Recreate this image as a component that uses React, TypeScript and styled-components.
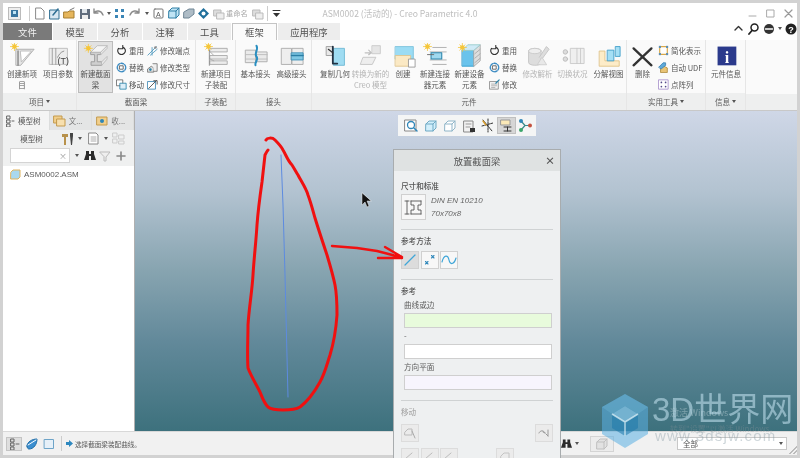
import React from "react";
import styled, { createGlobalStyle } from "styled-components";

const Global = createGlobalStyle`
  html, body { margin: 0; padding: 0; background: #d2d2d2; }
  #root { width: 800px; height: 458px; overflow: hidden; }
`;

const Root = styled.div`
  position: relative; width: 800px; height: 458px; box-sizing: border-box; overflow: hidden;
  padding: 3px 3px 3px; display: flex; flex-direction: column; background: #d2d2d2;
  font-family: "Noto Sans CJK SC", "Liberation Sans", sans-serif; font-size: 8px; color: #555;
  filter: blur(0.4px);
`;
const TitleBar = styled.div`
  height: 20px; flex: none; background: #fff; display: grid; grid-template-columns: 1fr auto 1fr; align-items: center;
`;
const Qat = styled.div`display: flex; align-items: center; padding-left: 5px; min-width: 0;`;
const AppIcon = styled.div`
  width: 13px; height: 13px; border: 1px solid #bbb; background: #eee; box-sizing: border-box; display: flex; align-items: center; justify-content: center;
  margin-right: 6px;
`;
const VSep = styled.div<{ $m?: number }>`width: 1px; height: 15px; background: #ccc; margin: 0 ${p => p.$m ?? 1}px;`;
const QatSlot = styled.div<{ $w?: number }>`
  width: ${p => p.$w ?? 15}px; height: 14px; display: flex; align-items: center; justify-content: center; flex: none;
`;
const QatText = styled.span`color: #a8a8a8; font-size: 7.2px; width: 25px; white-space: nowrap;`;
const Title = styled.div`
  color: #bdbdbd; font-size: 8.6px; white-space: nowrap;
`;
const WinControls = styled.div`display: flex; justify-content: flex-end; gap: 5px; padding-right: 2px; align-items: center;`;

const TabRow = styled.div`height: 17px; flex: none; background: #fff; display: flex; align-items: stretch;`;
const Tab = styled.div<{ $w: number; $kind?: string }>`
  width: ${p => p.$w}px; flex: none; box-sizing: border-box; display: flex; align-items: center; justify-content: center;
  font-size: 9.4px; margin-right: 1px;
  background: ${p => (p.$kind === "file" ? "#7a7a7a" : p.$kind === "active" ? "#fbfbfb" : "#ededed")};
  color: ${p => (p.$kind === "file" ? "#f2f2f2" : "#505050")};
  border: ${p => (p.$kind === "active" ? "1px solid #c4c4c4" : "none")};
  border-bottom: none;
`;
const Helpers = styled.div`margin-left: auto; display: flex; align-items: center; gap: 3px; margin-top: -6px;`;

const Ribbon = styled.div`height: 70px; flex: none; background: #fafafa; display: flex; border-bottom: 1px solid #c8c8c8;`;
const Group = styled.div<{ $w: number }>`
  width: ${p => p.$w}px; flex: none; display: flex; flex-direction: column; box-sizing: border-box; border-right: 1px solid #e6e6e6;
`;
const GroupBody = styled.div`height: 53px; display: flex; padding: 1px 0 0 1px; box-sizing: border-box;`;
const GroupFoot = styled.div`
  flex: 1; background: #eeefef; display: flex; align-items: center; justify-content: center; gap: 2px; font-size: 7.5px; color: #5a5a5a;
`;
const Filler = styled.div`flex: 1; display: flex; flex-direction: column; &::after { content: ""; margin-top: auto; height: 16px; background: #eeefef; }`;
const Caret = styled.span`
  display: inline-block; width: 0; height: 0; border: 2.5px solid transparent; border-top: 3px solid #555; border-bottom: none;
`;
const LargeTool = styled.div<{ $w: number; $on?: boolean; $off?: boolean }>`
  width: ${p => p.$w}px; flex: none; height: 52px; box-sizing: border-box; display: flex; flex-direction: column; align-items: center; padding-top: 1px;
  background: ${p => (p.$on ? "#e2e2e2" : "transparent")}; border: 1px solid ${p => (p.$on ? "#bcbcbc" : "transparent")};
  color: ${p => (p.$off ? "#b4b4b4" : "#555")};
`;
const LargeLabel = styled.div`
  font-size: 7.5px; line-height: 11px; text-align: center; white-space: pre-line; width: 120%;
`;
const SmallCol = styled.div<{ $w: number }>`width: ${p => p.$w}px; flex: none; display: flex; flex-direction: column; padding-top: 1px;`;
const SmallTool = styled.div`height: 17px; display: flex; align-items: center; gap: 2px; font-size: 7.5px; white-space: nowrap; color: #555;`;

const Main = styled.div`flex: 1; min-height: 0; display: flex; position: relative;`;
const LeftPanel = styled.div`width: 132px; flex: none; box-sizing: border-box; display: flex; flex-direction: column; background: #eff0f0; border-right: 1px solid #b0b0b0;`;
const PanelTabs = styled.div`height: 19px; display: flex; background: #dcdddd; flex: none;`;
const PanelTab = styled.div<{ $w: number; $on?: boolean }>`
  width: ${p => p.$w}px; box-sizing: border-box; display: flex; align-items: center; gap: 3px; padding-left: 3px; font-size: 7.5px;
  background: ${p => (p.$on ? "#f4f4f4" : "#e4e5e5")}; margin-right: 1px; color: ${p => (p.$on ? "#555" : "#777")};
`;
const PanelRow = styled.div`height: 17px; display: flex; align-items: center; flex: none; font-size: 7.5px;`;
const TreeLabel = styled.span`width: 57px; text-align: center;`;
const SearchBox = styled.div`
  width: 60px; height: 15px; margin-left: 7px; background: #fff; border: 1px solid #d4d4d4; box-sizing: border-box; display: flex; align-items: center; justify-content: flex-end;
  padding-right: 2px; color: #999; font-size: 8px; flex: none;
`;
const Tree = styled.div`flex: 1; background: #fff; margin-top: 2px; padding: 2px 0 0 7px; display: flex; flex-direction: column;`;
const TreeItem = styled.div`height: 13px; display: flex; align-items: center; gap: 3px; font-size: 8px; color: #5a5a5a; font-family: "Liberation Sans", sans-serif;`;

const Viewport = styled.div`
  flex: 1; position: relative; background: linear-gradient(180deg, #cfd7e7 0%, #b3c3d1 25%, #87a4b0 50%, #62899a 72%, #3d717d 100%);
`;
const MiniBar = styled.div`
  position: absolute; left: 263px; top: 4px; height: 21px; width: 138px; box-sizing: border-box; background: #f4f5f5; display: flex; align-items: center; padding-left: 4px;
`;
const MiniBtn = styled.div<{ $on?: boolean }>`
  width: 19px; height: 17px; display: flex; align-items: center; justify-content: center; flex: none;
  background: ${p => (p.$on ? "#d6d6d6" : "transparent")}; border: 1px solid ${p => (p.$on ? "#c0c0c0" : "transparent")}; box-sizing: border-box;
`;

const Dialog = styled.div`
  position: absolute; left: 258px; top: 38px; width: 168px; height: 340px; box-sizing: border-box; background: #eef0f1; border: 1px solid #a8acae; z-index: 2;
  display: flex; flex-direction: column;
`;
const DlgHead = styled.div`
  height: 21px; flex: none; background: #dfe2e2; display: flex; align-items: center; justify-content: center; position: relative; font-size: 9.3px; color: #555;
`;
const DlgClose = styled.span`position: absolute; right: 5px; top: 3px; font-size: 10px; font-weight: 700; color: #555;`;
const DlgBody = styled.div`padding: 9px 7px 0; display: flex; flex-direction: column;`;
const DlgLabel = styled.div<{ $off?: boolean }>`
  font-size: 7.6px; line-height: 12px; color: ${p => (p.$off ? "#aaa" : "#555")}; font-weight: 500;
`;
const SpecRow = styled.div`display: flex; margin-top: 2px; gap: 5px; height: 27px;`;
const IconBtn = styled.div<{ $w?: number; $h?: number; $on?: boolean; $off?: boolean; $ml?: number }>`
  width: ${p => p.$w ?? 18}px; height: ${p => p.$h ?? 18}px; box-sizing: border-box; flex: none; display: flex; align-items: center; justify-content: center;
  margin-left: ${p => p.$ml ?? 0}px;
  border: 1px solid ${p => (p.$off ? "#dcdcdc" : "#d0d0d0")}; background: ${p => (p.$on ? "#dcdcdc" : p.$off ? "#ebebeb" : "#f7f7f7")};
`;
const SpecText = styled.div`
  font-style: italic; font-size: 8px; line-height: 13px; color: #666; font-family: "Liberation Sans", sans-serif;
`;
const Rule = styled.div<{ $t: number; $b: number }>`height: 1px; background: #cfd2d3; margin: ${p => p.$t}px 0 ${p => p.$b}px;`;
const BtnRow = styled.div<{ $t: number }>`display: flex; gap: 1.5px; margin-top: ${p => p.$t}px;`;
const FieldLabel = styled.div`font-size: 7.6px; line-height: 12px; margin: 2px 0 0 3px; color: #5c5c5c;`;
const Field = styled.div<{ $bg: string }>`
  height: 15px; margin: 2px 1px 0 3px; background: ${p => p.$bg}; border: 1px solid #cfcfcf; box-sizing: border-box;
`;
const MoveRow = styled.div`display: flex; justify-content: space-between; margin-top: 6px;`;

const StatusBar = styled.div`
  height: 24px; flex: none; background: #f1f1f1; display: flex; align-items: center; padding-left: 3px; border-top: 1px solid #d8d8d8; box-sizing: border-box;
`;
const StatusIcon = styled.div<{ $on?: boolean; $w?: number }>`
  width: ${p => p.$w ?? 16}px; height: 14px; display: flex; align-items: center; justify-content: center; box-sizing: border-box; flex: none; margin-right: 1px;
  background: ${p => (p.$on ? "#dedede" : "transparent")}; border: 1px solid ${p => (p.$on ? "#c4c4c4" : "transparent")};
`;
const StatusMsg = styled.div`display: flex; align-items: center; gap: 1px; font-size: 6.6px; color: #5a5a5a; white-space: nowrap; width: 496px; flex: none;`;
const Filter = styled.div`
  width: 110px; height: 13px; margin-left: 63px; background: #fff; border: 1px solid #c8c8c8; box-sizing: border-box; display: flex; align-items: center; justify-content: space-between;
  padding: 0 3px 0 5px; font-size: 7.5px; flex: none;
`;
const SquareBtn = styled.div`width: 24px; height: 16px; margin-left: 8px; border: 1px solid #d4d4d4; background: #ececec; box-sizing: border-box; display: flex; align-items: center; justify-content: center;`;
const Grip = styled.div`
  position: absolute; right: 3px; bottom: 4px; width: 8px; height: 8px; z-index: 1;
  background: linear-gradient(135deg, transparent 50%, #bbb 50%, #bbb 60%, transparent 60%, transparent 75%, #bbb 75%, #bbb 85%, transparent 85%);
`;

const Watermark = styled.div`position: absolute; left: 600px; top: 392px; width: 200px; height: 60px; z-index: 4; pointer-events: none;`;
const WmLogo = styled.svg`position: absolute; left: 0; top: 0;`;
const WmBig = styled.div`
  position: absolute; left: 52px; top: -2px; font-family: "Liberation Sans", "Noto Sans CJK SC", sans-serif; font-size: 33px; line-height: 40px; color: rgba(190, 222, 235, 0.6); white-space: nowrap;
`;
const WmUrl = styled.div`
  position: absolute; left: 55px; top: 36px; font-family: "Liberation Sans", sans-serif; font-size: 15px; line-height: 16px; letter-spacing: 1.200px; color: rgba(130, 150, 160, 0.38); white-space: nowrap;
`;
const WmWin = styled.div`
  position: absolute; left: 70px; top: 14px; font-size: 9px; line-height: 14px; color: rgba(210, 225, 230, 0.4); white-space: nowrap;
`;
const WmWin2 = styled(WmWin)`top: 30px; font-size: 8px; color: rgba(140, 150, 155, 0.35);`;
const Annot = styled.svg`position: absolute; left: 0; top: 0; z-index: 3; pointer-events: none;`;

type GP = { s?: number; h?: number; v?: string; children: React.ReactNode };
const G = ({ s = 13, h, v, children }: GP) => (
  <svg width={s} height={h ?? s} viewBox={v ?? `0 0 ${s} ${h ?? s}`} fill="none" strokeLinecap="round" strokeLinejoin="round">{children}</svg>
);
const Star = ({ x = 5, y = 4 }: { x?: number; y?: number }) => (
  <g>
    <circle cx={x} cy={y} r="2.6" fill="#f5c63a" />
    <path d={`M${x} ${y - 4.5}V${y + 4.5}M${x - 4.5} ${y}H${x + 4.5}M${x - 3} ${y - 3}L${x + 3} ${y + 3}M${x + 3} ${y - 3}L${x - 3} ${y + 3}`} stroke="#f5c63a" strokeWidth="0.9" />
  </g>
);
const large: Record<string, React.ReactNode> = {
  newItem: <><path d="M7 7H27L12 25H7Z" fill="#e6e6e6" stroke="#aaa" /><path d="M9 9V25" stroke="#888" strokeWidth="1.6" /><path d="M12 9H24L13 21Z" fill="#fff" stroke="#bbb" /><Star /></>,
  params: <><path d="M4 6H24V24H4Z" fill="#ededed" stroke="#bbb" /><path d="M7 6V24M11 6V24" stroke="#999" /><path d="M13 16C14 14 16 10 20 9" stroke="#888" /><text x="13" y="23" fontSize="10" fill="#444" fontFamily="Liberation Sans">(T)</text></>,
  beam: <><path d="M9 10H20V13H16V21H21V25H9V21H13V13H9Z" fill="#cfcfcf" stroke="#999" /><path d="M20 10L27 3V6L20 13M21 21L27 15V18L21 25" fill="#e8e8e8" stroke="#bbb" /><path d="M9 10L16 3H27L20 10Z" fill="#f4f4f4" stroke="#bbb" /><Star x={6} y={6} /></>,
  subAsm: <><path d="M7 6H26V10H7ZM7 14H26V18H7ZM7 20H26V24H7Z" fill="#ececec" stroke="#aaa" /><path d="M7 10L11 14M7 18L11 20" stroke="#aaa" /><path d="M6 8V25" stroke="#888" /><Star x={5} y={4} /></>,
  joint: <><path d="M3 8H14V22H3ZM15 10H27V21H15Z" fill="#eaeaea" stroke="#aaa" /><path d="M3 13H27M3 18H27" stroke="#bbb" /><path d="M15 3C18 7 12 12 15 15C18 18 13 21 14 25" stroke="#2a8fc1" strokeWidth="2.2" /></>,
  joint2: <><path d="M3 6H14V24H3ZM15 6H27V24H15Z" fill="#eee" stroke="#aaa" /><path d="M14 11H27V19H14Z" fill="#7fc7e3" stroke="#3a8db5" /><path d="M14 14H27" stroke="#2a7ea5" strokeWidth="1.5" /></>,
  copyGeo: <><path d="M12 6H24V25H12Z" fill="#9fdcf2" stroke="#6fb9d4" /><path d="M4 4H11V14H4Z" fill="#e8e8e8" stroke="#999" /><path d="M11 4V23H16" stroke="#234" strokeWidth="2" /><path d="M6 7L11 11" stroke="#333" strokeWidth="1.3" /></>,
  convert: <><path d="M6 16H20L16 24H3Z" fill="#eee" stroke="#c4c4c4" /><path d="M16 3H25V12H16Z" fill="#e6e6e6" stroke="#c8c8c8" /><path d="M8 11H14M12 8L15 11L12 13" stroke="#c0c0c0" strokeWidth="1.4" /></>,
  create: <><path d="M5 4H25V18H5Z" fill="#9bdcf4" stroke="#7dc2dc" /><path d="M5 14H22V26H5Z" fill="#fbe9c4" stroke="#dfc58d" /><path d="M20 18H27V27H20Z" fill="#fff" stroke="#999" /></>,
  conn: <><path d="M11 5H26M11 24H26M8 10H26M8 19H26" stroke="#aaa" /><path d="M9 11H21V18H9Z" fill="#a0d9ef" stroke="#2c85ac" strokeWidth="1.2" /><path d="M5 13H12" stroke="#666" /><Star x={5} y={4} /></>,
  equip: <><path d="M6 8H19V26H6Z" fill="#69c3ec" stroke="#2f9ccc" /><path d="M19 8L26 2V20L19 26Z" fill="#dedede" stroke="#aaa" /><path d="M20 12L26 7M20 17L26 12M20 22L26 17" stroke="#aaa" /><path d="M6 8L12 2H26L19 8Z" fill="#cfeaf6" stroke="#9cc" /><Star x={6} y={5} /></>,
  analyze: <><path d="M4 9C4 5 18 5 18 9V22C18 26 4 26 4 22Z" fill="#ddd" stroke="#c4c4c4" /><ellipse cx="11" cy="9" rx="7" ry="3" fill="#eee" stroke="#c8c8c8" /><path d="M16 16L24 4L27 7L19 18" fill="#ddd" stroke="#c4c4c4" /><path d="M14 24L19 16L24 24Z" fill="#e8e8e8" stroke="#ccc" /></>,
  status: <><circle cx="6" cy="10" r="2.5" fill="#ddd" stroke="#bbb" /><circle cx="6" cy="18" r="2.5" fill="#ddd" stroke="#bbb" /><path d="M12 6H27V23H12ZM19 6V23M23 6V23" fill="#efefef" stroke="#c8c8c8" /></>,
  explode: <><path d="M4 9H10V20H26V26H4Z" fill="#fdecc8" stroke="#e0c287" /><path d="M13 8H20V20H13Z" fill="#a5dff5" stroke="#3e9dc9" /><path d="M22 4H27V15H22Z" fill="#a5dff5" stroke="#3e9dc9" /></>,
  del: <><path d="M4 6L24 25M24 6L4 25" stroke="#333" strokeWidth="2.6" /></>,
  info: <><rect x="4" y="4" width="21" height="21" fill="#2b3a8c" /><text x="14.500" y="22" textAnchor="middle" fontSize="18" fontWeight="700" fill="#fff" fontFamily="Liberation Serif">i</text></>,
};
const small: Record<string, React.ReactNode> = {
  reuse: <path d="M3 4A4.5 4.5 0 1 0 8 2.5M8 0.5V4.500H4" stroke="#333" strokeWidth="1.3" />,
  replace: <><circle cx="6.500" cy="6.500" r="5" stroke="#3b8bc2" strokeWidth="1.6" strokeDasharray="3 1.500" /><rect x="4.500" y="4.500" width="4" height="4" fill="#fff" stroke="#555" /></>,
  move: <><rect x="1" y="1" width="7" height="7" fill="#fff" stroke="#666" /><rect x="5" y="5" width="7" height="7" fill="#dceef8" stroke="#2c85ac" /></>,
  endpt: <><path d="M1 12L11 2M4 12L12 5M6 3V12" stroke="#4b97bd" /><circle cx="10" cy="3" r="1.500" fill="#888" /></>,
  type: <><path d="M1 8L5 5L8 7V12H1Z" fill="#ddd" stroke="#777" /><path d="M7 2H12V11H8" stroke="#777" fill="#eee" /><circle cx="4" cy="9" r="1.500" fill="#2c85ac" /></>,
  dim: <><rect x="1" y="3" width="9" height="9" fill="#fff" stroke="#3d86b3" /><path d="M2 11L11 2M8 2H12V6" stroke="#444" /></>,
  modify: <><rect x="1" y="3" width="10" height="9" fill="#f4f4f4" stroke="#888" /><path d="M3 6H9M3 8H9M3 10H7" stroke="#aaa" /><path d="M8 5L12 1" stroke="#2c85ac" strokeWidth="1.400" /></>,
  simp: <><rect x="2" y="2" width="9" height="9" fill="#fff" stroke="#d9a94a" strokeWidth="1.400" /><rect x="1" y="1" width="2.500" height="2.500" fill="#5d8db3" /><rect x="9.500" y="9.500" width="2.500" height="2.500" fill="#5d8db3" /><rect x="9.500" y="1" width="2.500" height="2.500" fill="#5d8db3" /><rect x="1" y="9.500" width="2.500" height="2.500" fill="#5d8db3" /></>,
  udf: <><path d="M3 12V7L7 5L11 7V12Z" fill="#e9c476" stroke="#b08c3c" /><path d="M1 6L6 1H9V4L4 8Z" fill="#5fa9d8" stroke="#3c84b6" /></>,
  dots: <><rect x="1" y="1" width="11" height="11" fill="#fff" stroke="#a78fcb" />{[4, 9].map(x => [4, 9].map(y => <circle key={`${x}${y}`} cx={x} cy={y} r="1" fill="#544a8a" />))}</>,
};
const Lg = ({ n }: { n: string }) => <G s={25} h={25} v="0 0 28 28">{large[n]}</G>;
const Sm = ({ n }: { n: string }) => <G s={11} h={11} v="0 0 13 13">{small[n]}</G>;
const Tool = ({ n, w = 35, on, off, children }: { n: string; w?: number; on?: boolean; off?: boolean; children: string }) => (
  <LargeTool $w={w} $on={on} $off={off}><Lg n={n} /><LargeLabel>{children}</LargeLabel></LargeTool>
);
const Smalls = ({ w, items }: { w: number; items: [string, string][] }) => (
  <SmallCol $w={w}>{items.map(([n, t]) => <SmallTool key={t}><Sm n={n} /><span>{t}</span></SmallTool>)}</SmallCol>
);
const Bino = () => <G s={12} h={11}><path d="M2 1H5V4H7V1H10V4L12 10H7V6H5V10H0L2 4Z" fill="#2b2b2b" /></G>;
const Cube = ({ c = "#e9e9e9", st = "#bbb" }: { c?: string; st?: string }) => (
  <G s={14}><path d="M2 5L5 2H12V9L9 12H2Z" fill={c} stroke={st} /><path d="M2 5H9V12M9 5L12 2" stroke={st} /></G>
);

const qat: React.ReactNode[] = [
  <G key="a"><path d="M3 1H8L11 4V12H3Z" fill="#fff" stroke="#8a8a8a" /></G>,
  <G key="b"><rect x="2" y="3" width="9" height="9" fill="#d9e8f2" stroke="#2e6e92" /><path d="M5 8L10 2" stroke="#2e6e92" strokeWidth="1.500" /></G>,
  <G key="c"><path d="M1 5H5L6 4H11V11H1Z" fill="#e6b65c" stroke="#a77e30" /><path d="M7 3L11 1" stroke="#777" /></G>,
  <G key="d"><rect x="2" y="2" width="10" height="10" fill="#606c7c" /><rect x="4" y="2" width="5" height="4" fill="#dfe5ea" /><rect x="4" y="8" width="6" height="4" fill="#eee" /></G>,
  <G key="e"><path d="M2 6C4 3 9 3 11 8M2 2V6H6" stroke="#8b8b8b" strokeWidth="1.400" /></G>,
];

export default function App() {
  return (
    <Root>
      <Global />
      <TitleBar>
        <Qat>
          <AppIcon><G s={9}><rect x="1" y="1" width="7" height="7" fill="#3a76a0" /><rect x="3" y="2" width="3" height="3" fill="#bfe4f5" /></G></AppIcon>
          <VSep $m={2} />
          {qat.slice(0, 4).map((q, i) => <QatSlot key={i}>{q}</QatSlot>)}
          <QatSlot $w={13}>{qat[4]}</QatSlot><QatSlot $w={8}><Caret /></QatSlot>
          <QatSlot $w={13}><G><path d="M2 2H5V5H2ZM8 2H11V5H8ZM2 8H5V11H2ZM8 8H11V11H8Z" fill="#3b86b6" /></G></QatSlot>
          <QatSlot $w={16}><G><path d="M11 6C9 3 4 3 2 8M11 2V6H7" stroke="#8b8b8b" strokeWidth="1.400" /></G></QatSlot>
          <QatSlot $w={9}><Caret /></QatSlot>
          <QatSlot><G s={13}><rect x="2" y="2" width="9" height="9" rx="1" stroke="#777" /><text x="4" y="9.500" fontSize="7" fill="#555" fontFamily="Liberation Sans">A</text></G></QatSlot>
          <QatSlot><Cube c="#bfe4f5" st="#2e7ea5" /></QatSlot>
          <QatSlot><G s={14}><path d="M2 6L7 3H12V8L7 12H2Z" fill="#aebcc6" stroke="#6f8594" /></G></QatSlot>
          <QatSlot><G s={13}><path d="M6.500 1L12 6.500L6.500 12L1 6.500Z" fill="#1f6f9b" /><circle cx="6.500" cy="6.500" r="2" fill="#fff" /></G></QatSlot>
          <QatSlot><G s={14}><path d="M2 4H9V10H2Z" fill="#ddd" stroke="#bbb" /><path d="M5 7H12V13H5Z" fill="#eee" stroke="#bbb" /></G></QatSlot>
          <QatText>重命名</QatText>
          <QatSlot $w={14}><G s={14}><path d="M2 4H9V10H2Z" fill="#ddd" stroke="#bbb" /><path d="M5 7H12V13H5Z" fill="#eee" stroke="#bbb" /></G></QatSlot>
          <VSep $m={2} />
          <QatSlot $w={12}><G s={9}><path d="M1 1.500H8" stroke="#333" /><path d="M1 4H8L4.500 8Z" fill="#333" /></G></QatSlot>
        </Qat>
        <Title>ASM0002 (活动的) - Creo Parametric 4.0</Title>
        <WinControls>
          <G s={13}><path d="M3 9H10" stroke="#aaa" /></G>
          <G s={13}><rect x="3" y="3" width="7" height="7" stroke="#aaa" /></G>
          <G s={13}><path d="M3 3L10 10M10 3L3 10" stroke="#999" strokeWidth="1.200" /></G>
        </WinControls>
      </TitleBar>
      <TabRow>
        <Tab $w={49} $kind="file">文件</Tab>
        <Tab $w={44}>模型</Tab>
        <Tab $w={44}>分析</Tab>
        <Tab $w={44}>注释</Tab>
        <Tab $w={43}>工具</Tab>
        <Tab $w={45} $kind="active">框架</Tab>
        <Tab $w={62}>应用程序</Tab>
        <Helpers>
          <G s={11}><path d="M2 7L5.500 3.500L9 7" stroke="#333" strokeWidth="1.400" /></G>
          <G s={13}><circle cx="7.500" cy="5.500" r="3.500" stroke="#222" strokeWidth="1.500" /><path d="M5 8.500L2 12" stroke="#222" strokeWidth="1.800" /></G>
          <G s={12}><circle cx="6" cy="6" r="5" fill="#333" /><path d="M2.500 6H9.500" stroke="#fff" strokeWidth="1.500" /></G>
          <Caret />
          <G s={12}><circle cx="6" cy="6" r="5.500" fill="#222" /><text x="6" y="9.500" textAnchor="middle" fontSize="9" fontWeight="700" fill="#fff" fontFamily="Liberation Sans">?</text></G>
        </Helpers>
      </TabRow>
      <Ribbon>
        <Group $w={74}>
          <GroupBody><Tool n="newItem" w={36}>{"创建新项\n目"}</Tool><Tool n="params" w={36}>项目参数</Tool></GroupBody>
          <GroupFoot>项目 <Caret /></GroupFoot>
        </Group>
        <Group $w={119}>
          <GroupBody>
            <Tool n="beam" on>{"新建截面\n梁"}</Tool>
            <SmallCol $w={3} />
            <Smalls w={31} items={[["reuse", "重用"], ["replace", "替换"], ["move", "移动"]]} />
            <Smalls w={47} items={[["endpt", "修改端点"], ["type", "修改类型"], ["dim", "修改尺寸"]]} />
          </GroupBody>
          <GroupFoot>截面梁</GroupFoot>
        </Group>
        <Group $w={40}>
          <GroupBody><Tool n="subAsm" w={38}>{"新建项目\n子装配"}</Tool></GroupBody>
          <GroupFoot>子装配</GroupFoot>
        </Group>
        <Group $w={76}>
          <GroupBody><Tool n="joint" w={37}>基本接头</Tool><Tool n="joint2" w={35}>高级接头</Tool></GroupBody>
          <GroupFoot>接头</GroupFoot>
        </Group>
        <Group $w={315}>
          <GroupBody>
            <SmallCol $w={4} />
            <Tool n="copyGeo" w={36}>复制几何</Tool>
            <Tool n="convert" off>{"转换为新的\nCreo 模型"}</Tool>
            <Tool n="create" w={30}>创建</Tool>
            <Tool n="conn" w={34}>{"新建连接\n器元素"}</Tool>
            <Tool n="equip">{"新建设备\n元素"}</Tool>
            <SmallCol $w={2} />
            <Smalls w={31} items={[["reuse", "重用"], ["replace", "替换"], ["modify", "修改"]]} />
            <Tool n="analyze" off>修改解析</Tool>
            <Tool n="status" off>切换状况</Tool>
            <Tool n="explode" w={37}>分解视图</Tool>
          </GroupBody>
          <GroupFoot>元件</GroupFoot>
        </Group>
        <Group $w={79}>
          <GroupBody><Tool n="del" w={29}>删除</Tool><SmallCol $w={1} /><Smalls w={48} items={[["simp", "简化表示"], ["udf", "自动 UDF"], ["dots", "点阵列"]]} /></GroupBody>
          <GroupFoot>实用工具 <Caret /></GroupFoot>
        </Group>
        <Group $w={40}>
          <GroupBody><Tool n="info" w={38}>元件信息</Tool></GroupBody>
          <GroupFoot>信息 <Caret /></GroupFoot>
        </Group>
        <Filler />
      </Ribbon>
      <Main>
        <LeftPanel>
          <PanelTabs>
            <PanelTab $w={46} $on><G s={9} h={12}><path d="M1 1H4V4H1ZM1 5H4V8H1ZM1 9H4V12H1ZM6 6H8" stroke="#666" /></G>模型树</PanelTab>
            <PanelTab $w={42}><G s={13}><rect x="1" y="2" width="8" height="7" fill="#f1cf8c" stroke="#c49a4c" /><rect x="4" y="5" width="8" height="7" fill="#f7dfae" stroke="#c49a4c" /></G>文...</PanelTab>
            <PanelTab $w={41}><G s={13}><rect x="2" y="3" width="10" height="8" fill="#f1cf8c" stroke="#c49a4c" /><circle cx="7" cy="7" r="2" fill="#2e86b8" /></G>收...</PanelTab>
          </PanelTabs>
          <PanelRow>
            <TreeLabel>模型树</TreeLabel>
            <QatSlot $w={15}><G s={13} h={14}><path d="M1 2H7V5H5V13H3V5H1Z" fill="#b8924c" /><path d="M9 1H12V4L11 13H10L9 4Z" fill="#444" /></G></QatSlot>
            <QatSlot $w={10}><Caret /></QatSlot>
            <QatSlot $w={17}><G s={13}><path d="M2 1H9L11 3V12H2Z" fill="#fff" stroke="#888" /><path d="M4 5H9M4 7H9M4 9H9" stroke="#aaa" /></G></QatSlot>
            <QatSlot $w={8}><Caret /></QatSlot>
            <QatSlot $w={17}><G s={13}><path d="M1 1H5V5H1ZM1 7H5V11H1ZM7 3H12V7H7ZM7 9H12V12H7Z" stroke="#ccc" /></G></QatSlot>
          </PanelRow>
          <PanelRow>
            <SearchBox>×</SearchBox>
            <QatSlot $w={13}><Caret /></QatSlot>
            <QatSlot $w={13}><Bino /></QatSlot>
            <QatSlot $w={17}><G s={12}><path d="M1 2H11L7 7V11H5V7Z" stroke="#bbb" fill="#efefef" /></G></QatSlot>
            <QatSlot $w={16}><G s={10}><path d="M5 1V9M1 5H9" stroke="#888" strokeWidth="1.600" /></G></QatSlot>
          </PanelRow>
          <Tree>
            <TreeItem><G s={11}><path d="M1 3L3 1H10V8L8 10H1Z" fill="#a9d8ef" stroke="#e0b35c" /></G>ASM0002.ASM</TreeItem>
          </Tree>
        </LeftPanel>
        <Viewport>
          <MiniBar>
            <MiniBtn><G s={15}><rect x="1" y="2" width="11" height="11" fill="#fff" stroke="#888" /><circle cx="7" cy="7" r="3.500" stroke="#2e86b8" strokeWidth="1.300" /><path d="M10 10L13 13" stroke="#2e86b8" strokeWidth="1.500" /></G></MiniBtn>
            <MiniBtn><Cube c="#d2effb" st="#6fa9c4" /></MiniBtn>
            <MiniBtn><Cube c="#fff" st="#8fb5c8" /></MiniBtn>
            <MiniBtn><G s={14}><rect x="2" y="2" width="9" height="11" fill="#f2f2f2" stroke="#888" /><path d="M4 5H9M4 8H8" stroke="#999" /><rect x="8" y="9" width="5" height="4" fill="#333" /></G></MiniBtn>
            <MiniBtn><G s={15}><path d="M3 2L12 13M8 1V14M2 8L13 5" stroke="#333" strokeDasharray="2 1" /><path d="M3 3L6 7" stroke="#d89c2a" strokeWidth="1.400" /></G></MiniBtn>
            <MiniBtn $on><G s={14}><rect x="1" y="1" width="9" height="5" fill="#fbe9b8" stroke="#999" /><path d="M4 8H11M4 12H11M7.500 8V12" stroke="#333" /></G></MiniBtn>
            <MiniBtn><G s={15}><path d="M3 3L7 7.500L3 12M7 7.500H12" stroke="#3a8a8a" strokeWidth="1.200" /><circle cx="3" cy="3" r="2" fill="#2e86b8" /><circle cx="3" cy="12" r="2" fill="#3aa56a" /><circle cx="12" cy="7.500" r="2" fill="#c4523f" /></G></MiniBtn>
          </MiniBar>
          <Dialog>
            <DlgHead>放置截面梁<DlgClose>×</DlgClose></DlgHead>
            <DlgBody>
              <DlgLabel>尺寸和标准</DlgLabel>
              <SpecRow>
                <IconBtn $w={25} $h={26}><G s={19}><path d="M3 3V16M1 3H5M1 16H5M7 3H17M7 16H17M7 3V7H10V12H7V16M17 3V7H14V12H17V16" stroke="#555" strokeWidth="0.900" /></G></IconBtn>
                <SpecText>DIN EN 10210<br />70x70x8</SpecText>
              </SpecRow>
              <Rule $t={8} $b={5} />
              <DlgLabel>参考方法</DlgLabel>
              <BtnRow $t={4}>
                <IconBtn $on><G s={14}><path d="M2 12L12 2" stroke="#3fa6d8" strokeWidth="1.200" /></G></IconBtn>
                <IconBtn><G s={14}><path d="M8.500 2.500L11 5M11 2.500L8.500 5M2.500 8.500L5 11M5 8.500L2.500 11" stroke="#3088bb" strokeWidth="1.100" /></G></IconBtn>
                <IconBtn><G s={16}><path d="M1 10C3 2 7 3 8 8C9 13 13 13 15 6" stroke="#3fa6d8" strokeWidth="1.200" /></G></IconBtn>
              </BtnRow>
              <Rule $t={10} $b={5} />
              <DlgLabel>参考</DlgLabel>
              <FieldLabel>曲线或边</FieldLabel>
              <Field $bg="#e8fbdc" />
              <FieldLabel>-</FieldLabel>
              <Field $bg="#ffffff" />
              <FieldLabel>方向平面</FieldLabel>
              <Field $bg="#f7f5fd" />
              <Rule $t={10} $b={5} />
              <DlgLabel $off>移动</DlgLabel>
              <MoveRow>
                <IconBtn $off><G s={14}><path d="M2 6L5 3H9V9H2Z" stroke="#bbb" /><path d="M9 5L12 12" stroke="#aaa" /></G></IconBtn>
                <IconBtn $off><G s={14}><path d="M2 7C3 4 7 4 8 7M8 7L6 6M11 4V10M11 10L9 8" stroke="#999" /></G></IconBtn>
              </MoveRow>
              <BtnRow $t={6}>
                {[0, 1, 2].map(i => <IconBtn key={i} $off><G s={14}><path d="M2 9L9 3" stroke="#bbb" /></G></IconBtn>)}
                <IconBtn $off $ml={36}><G s={14}><path d="M3 6L6 3H11V9L8 12H3Z" stroke="#c4c4c4" /></G></IconBtn>
              </BtnRow>
            </DlgBody>
          </Dialog>
        </Viewport>
      </Main>
      <StatusBar>
        <StatusIcon $on><G s={12}><path d="M3 1H6V4H3ZM3 5H6V8H3ZM3 9H6V12H3ZM8 6H11" stroke="#666" /></G></StatusIcon>
        <StatusIcon $w={17}><G s={14}><path d="M2 9C2 5 7 2 12 2C12 7 9 12 4 12C3 12 2 11 2 9Z" fill="#3c8fd0" stroke="#1f6ea8" /><path d="M3 8L11 3" stroke="#fff" /></G></StatusIcon>
        <StatusIcon $w={16}><G s={12}><rect x="1.500" y="1.500" width="9" height="9" fill="#e6f0f8" stroke="#6ea4c8" /></G></StatusIcon>
        <VSep $m={3} />
        <StatusMsg>
          <G s={9}><path d="M1 3H4V1L8 4.500L4 8V6H1Z" fill="#2e88bf" /></G>
          选择截面梁装配曲线。
        </StatusMsg>
        <QatSlot $w={11}><Bino /></QatSlot>
        <QatSlot $w={10}><Caret /></QatSlot>
        <SquareBtn><Cube c="#e2e2e2" st="#c0c0c0" /></SquareBtn>
        <Filter>全部<Caret /></Filter>
      </StatusBar>
      <Grip />
      <Annot width="800" height="458" viewBox="0 0 800 458" fill="none" strokeLinecap="round" strokeLinejoin="round">
        <path d="M281 155L283 205L285 275L288 397" stroke="#5d8be0" strokeWidth="1" />
        <path d="M266 140C267 138 272 137 275 140C278 143 281 146 283 150C286 155 288 161 292 165C294 168 296 172 298 175C301 181 306 188 308 195C311 203 313 211 315 218C319 231 323 243 327 255C330 265 333 275 335 285C337 295 337 305 337 315C336 329 334 342 330 355C327 364 325 373 320 382C315 391 308 401 300 407C295 410 289 410 283 410C278 410 272 410 268 407C264 403 262 397 260 392C256 384 251 376 248 368C247 354 248 339 248 325C249 308 252 292 253 275C254 258 256 242 257 225C258 211 260 196 262 182C263 173 264 164 265 155C266 153 267 151 268 150" stroke="#f01010" strokeWidth="3" />
        <path d="M332 246L357 248L377 251L400 257M385 247L402 257M378 258L402 258" stroke="#f01010" strokeWidth="2.400" />
        <path d="M362 193V205L365 202L367 207L369 206L367 201H371Z" fill="#111" stroke="#eee" strokeWidth="0.500" />
      </Annot>
      <Watermark>
        <WmLogo width="50" height="58" viewBox="0 0 50 58">
          <path d="M25 2L48 15V42L25 56L2 42V15Z" fill="rgba(90,175,225,0.55)" />
          <path d="M25 14L38 22V36L25 44L12 36V22Z" fill="rgba(30,120,170,0.55)" />
          <path d="M25 14L38 22L25 30L12 22Z" fill="rgba(170,215,235,0.55)" />
          <path d="M25 2L48 15L38 22L25 14L12 22L2 15Z" fill="rgba(120,190,220,0.3)" />
          <path d="M25 30V44M12 22L25 30L38 22" stroke="rgba(230,245,250,0.7)" strokeWidth="1.500" fill="none" />
        </WmLogo>
        <WmWin>激活 Windows</WmWin>
        <WmWin2>转到"设置"以激活 Windows。</WmWin2>
        <WmBig>3D世界网</WmBig>
        <WmUrl>www.3dsjw.com</WmUrl>
      </Watermark>
    </Root>
  );
}
